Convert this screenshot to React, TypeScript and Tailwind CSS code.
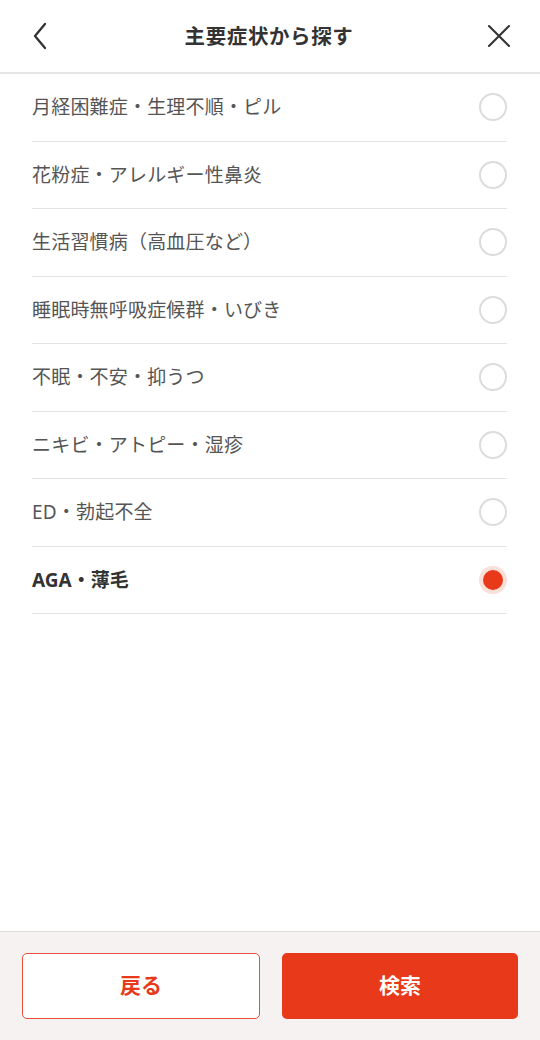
import { useState } from "react";

const symptoms = [
  "月経困難症・生理不順・ピル",
  "花粉症・アレルギー性鼻炎",
  "生活習慣病（高血圧など）",
  "睡眠時無呼吸症候群・いびき",
  "不眠・不安・抑うつ",
  "ニキビ・アトピー・湿疹",
  "ED・勃起不全",
  "AGA・薄毛",
];

export default function App() {
  const [selected, setSelected] = useState(7);

  return (
    <div
      className="flex flex-col h-[1040px] w-full bg-white text-[#333]"
      style={{ fontFamily: '"Noto Sans", "Noto Sans CJK JP", sans-serif' }}
    >
      {/* Header */}
      <header className="h-[74px] shrink-0 flex items-center justify-between px-[28px] border-b-2 border-[#e6e6e6]">
        <button className="w-[24px] h-[28px] flex items-center justify-center">
          <svg width="16" height="28" viewBox="0 0 16 28" fill="none" stroke="#333" strokeWidth="2.3" strokeLinecap="round" strokeLinejoin="round">
            <path d="M13 2 L3 14 L13 26" />
          </svg>
        </button>
        <h1 className="text-[20.5px] font-bold tracking-[0.03em]">主要症状から探す</h1>
        <button className="w-[26px] h-[26px] flex items-center justify-center">
          <svg width="24" height="24" viewBox="0 0 24 24" fill="none" stroke="#333" strokeWidth="2.1" strokeLinecap="round">
            <path d="M2 2 L22 22 M22 2 L2 22" />
          </svg>
        </button>
      </header>

      {/* List */}
      <ul className="px-[32px] pr-[33px]">
        {symptoms.map((label, i) => {
          const active = i === selected;
          return (
            <li
              key={label}
              onClick={() => setSelected(i)}
              className="h-[67.5px] flex items-center justify-between border-b border-[#e3e3e3] cursor-pointer"
            >
              <span
                className={
                  active
                    ? "text-[19px] font-bold text-[#333]"
                    : "text-[19px] text-[#555] tracking-[0.01em]"
                }
              >
                {label}
              </span>
              {active ? (
                <span className="w-[28px] h-[28px] rounded-full bg-[#fbe0da] flex items-center justify-center">
                  <span className="w-[20px] h-[20px] rounded-full bg-[#e8391a]" />
                </span>
              ) : (
                <span className="w-[28px] h-[28px] rounded-full border-2 border-[#dcdcdc] bg-white" />
              )}
            </li>
          );
        })}
      </ul>

      <div className="flex-1" />

      {/* Footer */}
      <footer className="h-[109px] shrink-0 bg-[#f6f2f1] border-t border-[#e0dcdb] flex items-center gap-[22px] px-[22px]">
        <button className="flex-1 h-[66px] rounded-[5px] border-[1.5px] border-[#e8503a] bg-white text-[#e8391a] text-[21px] font-bold">
          戻る
        </button>
        <button className="flex-1 h-[66px] rounded-[5px] bg-[#e8391a] text-white text-[21px] font-bold">
          検索
        </button>
      </footer>
    </div>
  );
}
